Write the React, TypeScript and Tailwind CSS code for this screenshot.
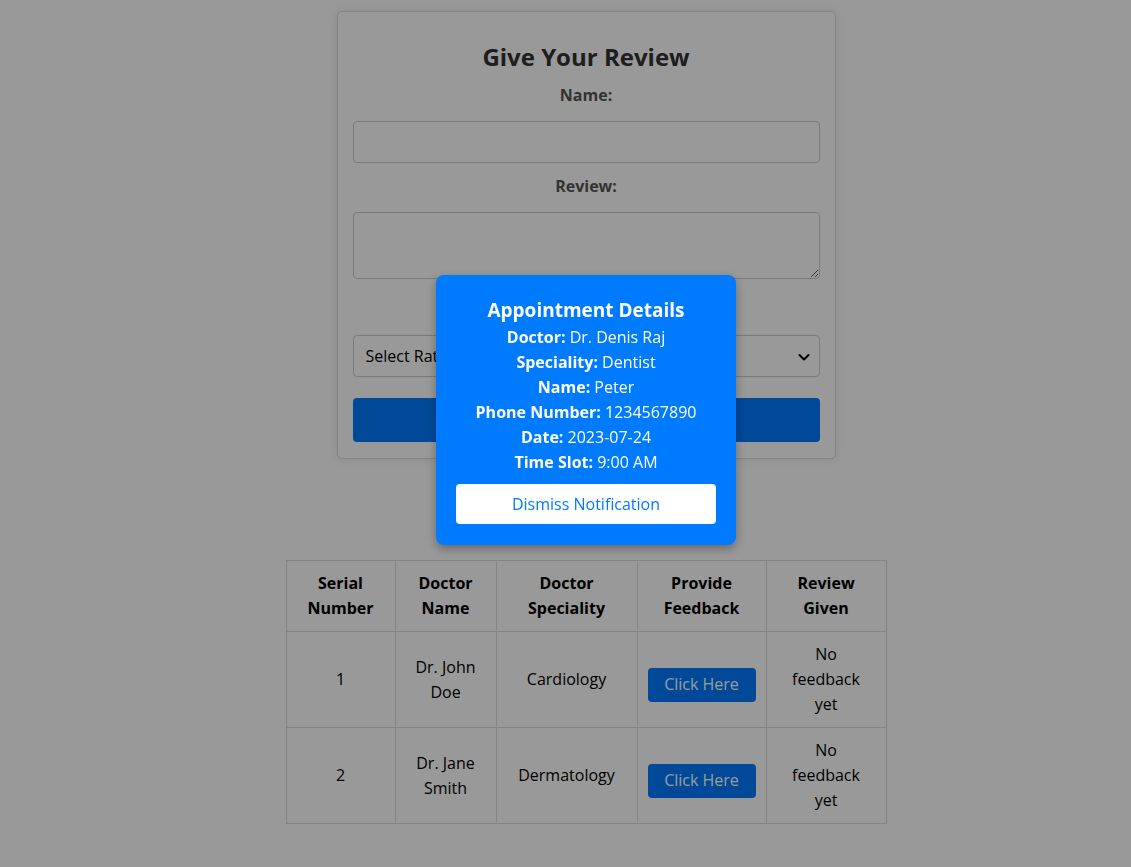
import React from "react";

const font = { fontFamily: '"Open Sans", "Noto Sans", sans-serif' };

export default function App() {
  return (
    <div className="relative min-h-[867px] bg-white text-black" style={font}>
      <div className="flex flex-col items-center pl-[41px] pt-[11px]">
        {/* Review card */}
        <div className="w-[499px] rounded-[5px] border border-[#dddddd] bg-white px-[15px] pt-[27px] pb-[16px] shadow-[0_0_10px_rgba(0,0,0,0.1)]">
          <h2 className="text-center text-[24px] font-bold leading-[36px] text-[#333333]">Give Your Review</h2>
          <div className="mt-[8px] text-center text-[16px] font-bold leading-[24px] text-[#555555]">Name:</div>
          <input className="mt-[14px] block h-[42px] w-full rounded-[4px] border border-[#cccccc] bg-white px-[12px] text-[16px]" />
          <div className="mt-[11px] text-center text-[16px] font-bold leading-[24px] text-[#555555]">Review:</div>
          <textarea className="mt-[14px] block h-[67px] w-full rounded-[4px] border border-[#cccccc] bg-white px-[12px] text-[16px]" />
          <div className="mt-[18px] text-center text-[16px] font-bold leading-[24px] text-[#555555]">Rating:</div>
          <div className="relative mt-[14px] flex h-[42px] w-full items-center rounded-[4px] border border-[#cccccc] bg-white px-[12px] text-[16px]">
            <span>Select Rating</span>
            <svg className="absolute right-[8px] top-[14px]" width="14" height="14" viewBox="0 0 14 14" fill="none">
              <path d="M2.5 5 L7 9.5 L11.5 5" stroke="#000" strokeWidth="2" strokeLinecap="round" strokeLinejoin="round" />
            </svg>
          </div>
          <button className="mt-[21px] block h-[44px] w-full rounded-[4px] bg-[#007bff] text-[16px] text-white">Submit</button>
        </div>

        {/* Table */}
        <table className="mt-[101px] w-[600px] table-fixed border-collapse text-center text-[16px] leading-[25px]">
          <colgroup>
            <col className="w-[109px]" />
            <col className="w-[101px]" />
            <col className="w-[141px]" />
            <col className="w-[129px]" />
            <col className="w-[120px]" />
          </colgroup>
          <thead>
            <tr>
              <th className="border border-[#dddddd] p-[10px] font-bold">Serial<br />Number</th>
              <th className="border border-[#dddddd] p-[10px] font-bold">Doctor<br />Name</th>
              <th className="border border-[#dddddd] p-[10px] font-bold">Doctor<br />Speciality</th>
              <th className="border border-[#dddddd] p-[10px] font-bold">Provide<br />Feedback</th>
              <th className="border border-[#dddddd] p-[10px] font-bold">Review<br />Given</th>
            </tr>
          </thead>
          <tbody>
            {[
              { n: "1", a: "Dr. John", b: "Doe", s: "Cardiology" },
              { n: "2", a: "Dr. Jane", b: "Smith", s: "Dermatology" },
            ].map((r) => (
              <tr key={r.n}>
                <td className="border border-[#dddddd] p-[10px]">{r.n}</td>
                <td className="border border-[#dddddd] p-[10px]">{r.a}<br />{r.b}</td>
                <td className="border border-[#dddddd] p-[10px]">{r.s}</td>
                <td className="border border-[#dddddd] p-[10px]">
                  <button className="mt-[10px] h-[34px] w-[108px] rounded-[4px] bg-[#007bff] text-[16px] text-white">Click Here</button>
                </td>
                <td className="border border-[#dddddd] p-[10px]">No<br />feedback<br />yet</td>
              </tr>
            ))}
          </tbody>
        </table>
      </div>

      {/* Overlay */}
      <div className="fixed inset-0 bg-black/40" />

      {/* Modal */}
      <div className="absolute left-[436px] top-[275px] w-[300px] rounded-[8px] bg-[#007bff] px-[20px] pt-[20px] pb-[21px] text-center text-white shadow-[0_4px_10px_rgba(0,0,0,0.3)]">
        <div className="text-[19px] font-bold leading-[30px]">Appointment Details</div>
        <div className="text-[16px] leading-[25px]">
          <div><span className="font-bold">Doctor:</span> Dr. Denis Raj</div>
          <div><span className="font-bold">Speciality:</span> Dentist</div>
          <div><span className="font-bold">Name:</span> Peter</div>
          <div><span className="font-bold">Phone Number:</span> 1234567890</div>
          <div><span className="font-bold">Date:</span> 2023-07-24</div>
          <div><span className="font-bold">Time Slot:</span> 9:00 AM</div>
        </div>
        <button className="mt-[9px] block h-[40px] w-full rounded-[4px] bg-white text-[16px] text-[#007bff]">Dismiss Notification</button>
      </div>
    </div>
  );
}
